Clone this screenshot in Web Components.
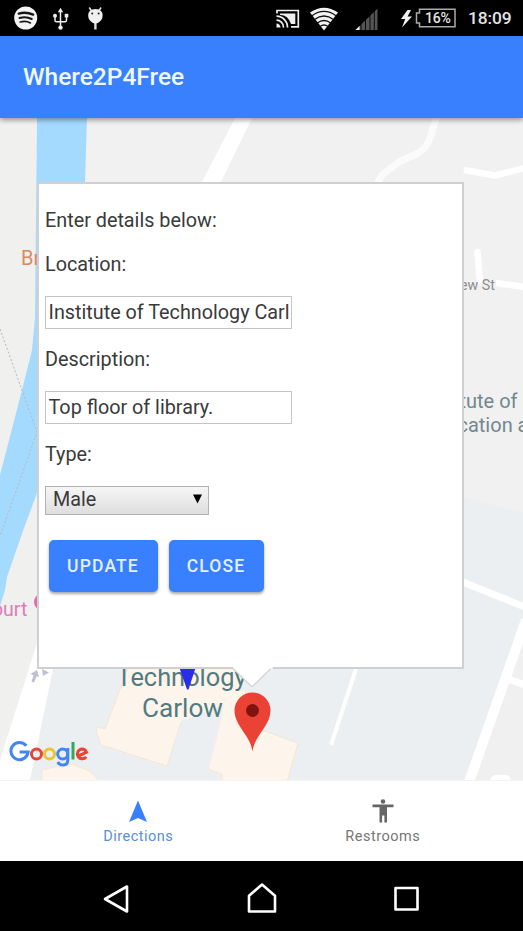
<!DOCTYPE html>
<html lang="en">
<head>
<meta charset="utf-8">
<title>Where2P4Free</title>
<style>
body{margin:0;font-family:Roboto,"Liberation Sans",sans-serif;background:#000}
</style>
</head>
<body>
<app-shell></app-shell>
<script>
const define=(name,html)=>customElements.define(name,class extends HTMLElement{
  constructor(){
    super();
    const t=document.createElement('template');
    t.innerHTML=html;
    this.attachShadow({mode:'open'}).append(t.content.cloneNode(true));
  }
});

define('status-bar',`
<style>
:host{display:flex;height:36px;background:#000;color:#e4e4e4;justify-content:space-between}
svg{display:block}
.l,.r{display:flex;align-items:center}
.l{padding-left:13px;gap:14px}
.r{padding-right:12px}
.time{font-size:17.4px;font-weight:500;line-height:37px;width:43px;white-space:nowrap;letter-spacing:-.15px}
.bat{display:grid;margin-left:2px;width:42px;height:36px}
.bat>*{grid-area:1/1}
.bat span{font-size:14px;font-weight:500;line-height:37px;padding-left:11px;letter-spacing:-.2px}
</style>
<div class="l">
<svg width="26" height="36" viewBox="0 0 26 36"><circle cx="12.7" cy="18" r="11.5" fill="#f4f4f4"/><g fill="none" stroke="#161616" stroke-linecap="round"><path d="M5.8 13.6Q13 11.4 20.2 14.6" stroke-width="2.4"/><path d="M6.5 18Q13 16 18.7 19" stroke-width="2"/><path d="M7.2 22Q13 20.4 17.4 22.9" stroke-width="1.7"/></g></svg>
<svg width="16" height="36" viewBox="0 0 16 36"><g stroke="#eee" fill="none" stroke-width="1.5"><path d="M7.5 10V28M2 16v4.5q0 1.3 1.3 1.3H7.5M13.500 15.500v4q0 2.300-1.300 2.300H7.500"/></g><path d="M7.500 7.800l2.700 4.400H4.800z" fill="#eee"/><circle cx="2" cy="15.800" r="2" fill="#eee"/><path d="M11.700 13.800h3.600v3.600h-3.600z" fill="#eee"/><circle cx="7.500" cy="27.600" r="2.200" fill="#eee"/></svg>
<svg width="26" height="36" viewBox="0 0 26 36" style="margin-left:4px"><path d="M2.300 7.500l2.500 4M14 7.500l-2.500 4" stroke="#e4e4e4" stroke-width="1.500"/><path d="M8.400 23v6.500" stroke="#ddd" stroke-width="2.400"/><path d="M1.200 15.600Q1.200 9 8.400 9t7.200 6.600Q15.600 20 11.600 22.600Q8.400 24.600 5.200 22.600Q1.200 20 1.200 15.600z" fill="#efefef"/><circle cx="5.200" cy="13.500" r="1" fill="#222"/><circle cx="11.600" cy="13.500" r="1" fill="#222"/></svg>
</div>
<div class="r">
<svg width="125" height="36" viewBox="274 0 125 36" style="margin-right:1px">
<path d="M277 13.600V10.500h21.300v16.300H291" fill="none" stroke="#eee" stroke-width="1.700"/>
<path d="M280 13.600h15.300v10.500h-4.300Q288 14.800 280 15z" fill="#eee"/>
<g fill="none" stroke="#eee" stroke-width="1.700"><path d="M276.500 16.200a11 11 0 0 1 11 11.400M276.500 20.200a7 7 0 0 1 7 7.400"/></g><path d="M276.500 23.500a4 4 0 0 1 4 4.100h-4z" fill="#eee"/>
<path d="M310 12.500Q324 3 338 12.500L324 30.500z" fill="#f3f3f3"/>
<g fill="none" stroke="#111" stroke-width="1.300"><path d="M312 15.700q12-8.600 24 0M314.500 19.500q9.500-7 19 0M317.300 23q6.700-5 13.400 0M320 26.500q4-3 8 0"/></g>
<path d="M377.500 8.500V30H355.500z" fill="#555"/><path d="M359.500 26v4h-4z" fill="#eee"/><path d="M361 10v20M365.500 10v20M370 8v22M374.300 8v22" stroke="#000" stroke-width=".9"/>
</svg>
<svg width="12" height="36" viewBox="0 0 12 36"><path d="M7.500 10L1 19h4.200L2 27.500 12 16.500H7.600L11 10z" fill="#f2f2f2"/></svg>
<div class="bat"><svg width="42" height="36" viewBox="0 0 42 36"><path d="M5.500 9.200H41v17.600H5.500V23h-3V13h3z" fill="none" stroke="#aaa" stroke-width="1.500"/></svg><span>16%</span></div>
<span class="time" style="margin-left:12px">18:09</span>
</div>`);

define('app-header',`
<style>:host{display:flex;align-items:center;height:82px;background:#3880ff;box-shadow:0 2px 5px rgba(0,0,0,.4);position:relative;z-index:1;padding-left:23px;color:#eff8ff;font-weight:500;font-size:24.500px;line-height:80px}
span{padding-bottom:1px}</style><span><slot></slot></span>`);

define('street-map',`
<style>:host{display:block;height:662px}svg{display:block}text{font-family:Roboto,"Liberation Sans",sans-serif}</style>
<svg width="523" height="662" viewBox="0 118 523 662">
<path d="M0 118h523v662H0z" fill="#f1f1f1"/><path d="M0 118h38v662H0z" fill="#f0f0ee"/>
<path d="M37 118h50l-2 64v311H37L24 528 7 577 5 590 0 606V475L22 390 32 350 35 318z" fill="#a5daff"/>
<g fill="none" stroke="#b4b9bd" stroke-width="1" stroke-dasharray="2 2"><path d="M0 329L37 432 3 528 0 536"/></g>
<path d="M464 497L523 513V780H30L53 660H464z" fill="#ebeff1"/>
<path d="M514 660L523 636V780H473z" fill="#f0f0f0"/>
<path d="M38 640L0 760V780H30L55 660z" fill="#fff"/>
<path d="M235 118h17L221 182H202z" fill="#fff"/>
<g fill="none" stroke="#fff" stroke-linejoin="round"><path d="M437 116L430 138Q427 148 418 153L399 162 382 175 377 184" stroke-width="7" stroke="#fbfbfb"/><path d="M464 170L495 175.500 525 168" stroke-width="6.500"/><path d="M477.500 252L480 281" stroke-width="6.500" stroke-linecap="round"/><path d="M496 283L525 287" stroke-width="6.500"/><path d="M460 581L525 607" stroke-width="7"/><path d="M526 620L468 785" stroke-width="10"/><path d="M508 679L525 685" stroke-width="7"/><path d="M357 666L331 745" stroke-width="4"/></g>
<path d="M490 780q2-5 6-5h10q4 0 5 5z" fill="#fff"/>
<g fill="#fdf5eb" stroke="#f4e6d4" stroke-width="1"><path d="M128 668L105 729 97 727 96 731 101 745 167 766 181 722 240 668z"/><path d="M226 690L208 769 222 774V782H287L298 743 262 730 245 690z"/><path d="M42 782V770L58 766 72 764 90 771 100 782z"/></g><path d="M175 668h72l-12 32-55 22z" fill="#fdf5eb"/><path d="M182 720L223 713 209 768 190 780H164L168 766z" fill="#ebeff1"/>
<g fill="#bfc2d0"><path d="M37 670l2 7-2.500-.5-2.500 6-2.500-1 2-6-3-1.500z"/><path d="M42 669l7 3.500-6 3.500z"/></g>
<g><text x="21" y="265" font-size="20" fill="#d98a62">Br</text>
<text x="460" y="290" font-size="14" fill="#8d8d8d" textLength="35" lengthAdjust="spacingAndGlyphs">ew St</text>
<g font-size="20.500" fill="#74878e"><text x="459.500" y="407.500" textLength="58" lengthAdjust="spacingAndGlyphs">tute of</text><text x="457.500" y="432" textLength="71" lengthAdjust="spacingAndGlyphs">cation a</text></g>
<text x="-8" y="616" font-size="19.500" fill="#df7bbb">ourt</text><circle cx="42" cy="602" r="8" fill="#e36bae"/>
<g font-size="25.500" fill="#517b80"><text x="116.500" y="686" textLength="130" lengthAdjust="spacingAndGlyphs">Technology</text><text x="142" y="717" textLength="81" lengthAdjust="spacingAndGlyphs">Carlow</text></g></g>
<path d="M179.500 668h16l-7 21.500h-1.500z" fill="#2a2de6"/>
<path d="M252.500 751.500C251 736 234.500 726 234.500 710.500a18 18 0 0 1 36 0C270.500 726 254 736 252.500 751.500z" fill="#ea4335"/><circle cx="252.500" cy="710.500" r="6.500" fill="#811411"/>
<g fill="none" stroke-width="3"><path d="M25.500 745.700A8.600 8.600 0 1 0 27.300 752H18.800" stroke="#4285f4" transform="translate(.8 0)"/><circle cx="36.500" cy="754" r="5" stroke="#ea4335"/><circle cx="49.500" cy="754" r="5" stroke="#edc233"/><g stroke="#4285f4"><circle cx="62.700" cy="754" r="5"/><path d="M67.800 748v12q0 5-5 5-3.500 0-5-3"/></g><path d="M73 742v17.500" stroke="#34a853"/><path d="M78 756l8.500-3.700q-1.500-3.300-4.500-3.300a4.900 4.900 0 1 0 4.200 7.800" stroke="#ea4335"/></g>
</svg>`);

define('text-field',`<style>:host{display:block;box-sizing:border-box;width:247px;height:33px;border:1.500px solid #c4c4c4;background:#fff;padding-left:2.500px;line-height:31px;overflow:hidden;white-space:nowrap}</style><slot></slot>`);
define('select-field',`<style>:host{display:flex;box-sizing:border-box;width:164px;height:29px;border:1.500px solid #b2b2b2;background:linear-gradient(#f6f6f6,#dedede);padding:0 6px 2px 7px;align-items:center;justify-content:space-between}</style><span><slot></slot></span><svg width="9" height="10"><path d="M0 .5h9L4.500 9.500z" fill="#000"/></svg>`);
define('action-button',`<style>:host{display:block;box-sizing:border-box;height:52px;border-radius:5px;background:#3880ff;color:#e3f1ff;text-align:center;font-size:17.500px;font-weight:500;line-height:52px;letter-spacing:1.150px;box-shadow:0 2px 3px rgba(0,0,0,.35)}</style><slot></slot>`);

define('info-window',`
<style>
:host{display:block;box-sizing:border-box;width:427px;height:487px;background:#fff;border:2px solid #d0d0d0;padding:25px 0 0 6px;font-size:19.800px;color:#3a3a3a}
p{margin:0;height:24px;line-height:24px}
.a{margin-top:20px}.b{margin-top:19px}
text-field,select-field{margin-top:19px}
select-field{margin-top:18.500px}
.btns{display:flex;gap:11px;margin:25.500px 0 0 3.500px}
.tip{position:absolute;left:193px;top:482px}
</style>
<p>Enter details below:</p>
<p class="a">Location:</p>
<text-field>Institute of Technology Carl</text-field>
<p class="b">Description:</p>
<text-field>Top floor of library.</text-field>
<p class="b">Type:</p>
<select-field>Male</select-field>
<div class="btns"><action-button style="width:109px">UPDATE</action-button><action-button style="width:95px">CLOSE</action-button></div>
<svg class="tip" width="42" height="24"><path d="M1 0h40v2L20 22 1 2z" fill="#fff"/><path d="M1 2.500L20 21 39 2.500" fill="none" stroke="#d0d0d0" stroke-width="1.200"/></svg>`);

define('tab-item',`<style>:host{display:flex;flex-direction:column;align-items:center;flex:1;font-size:14.500px;letter-spacing:.5px;line-height:20px}::slotted(svg){display:block}</style><slot name="icon"></slot><span><slot></slot></span>`);
define('tab-bar',`
<style>:host{display:flex;box-sizing:border-box;height:81px;background:#fff;border-top:1px solid #f4f4f4;padding:17px 18px 0 16px}</style>
<tab-item style="color:#5590e0"><svg slot="icon" width="18" height="29" viewBox="0 0 18 29"><path d="M9 2.500L18 24 9 20 0 24z" fill="#3880ff"/></svg>Directions</tab-item>
<tab-item style="color:#777"><svg slot="icon" width="22" height="29" viewBox="0 0 22 29"><circle cx="11" cy="3.500" r="2.300" fill="#666"/><path d="M.5 6.500h21v2.800H15V24.500h-2.600V17.500h-2.300V24.500H7.500V9.300H.5z" fill="#666"/></svg>Restrooms</tab-item>`);

define('nav-bar',`
<style>:host{display:flex;height:70px;background:#000;align-items:center;justify-content:space-between;padding:5px 103px 0;box-sizing:border-box}svg{display:block}
path{fill:none;stroke:#fff;stroke-width:2.600;stroke-linejoin:round}</style>
<svg width="27" height="36"><path d="M24 5.500V30.500L2 18z"/></svg>
<svg width="30" height="36"><path d="M2 14.800L15 3.500 28 14.800V30.500H2z"/></svg>
<svg width="27" height="36"><path d="M2.500 7h22v21.500h-22z"/></svg>`);

define('app-shell',`
<style>:host{display:flex;flex-direction:column;width:523px;height:931px;overflow:hidden}
main{position:relative;height:662px}
info-window{position:absolute;left:37px;top:64px}</style>
<status-bar></status-bar>
<app-header>Where2P4Free</app-header>
<main><street-map></street-map><info-window></info-window></main>
<tab-bar></tab-bar>
<nav-bar></nav-bar>`);
</script>
</body>
</html>
